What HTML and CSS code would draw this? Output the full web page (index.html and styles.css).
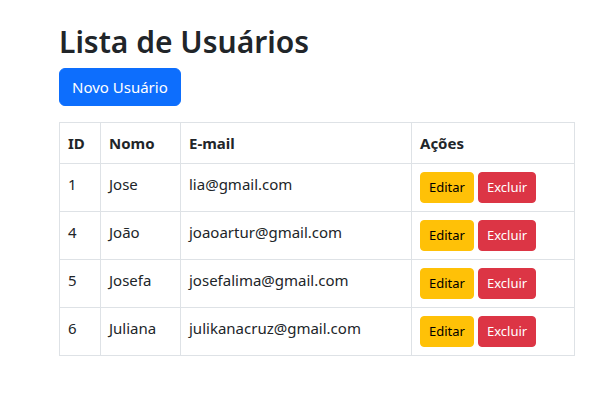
FILE: index.html
```html
<!DOCTYPE html>
<html lang="pt-BR">
<head>
<meta charset="utf-8">
<title>Lista de Usuários</title>
<link rel="stylesheet" href="styles.css">
</head>
<body>
<div class="container">
  <h1 class="title">Lista de Usuários</h1>
  <button class="btn btn-primary">Novo Usuário</button>
  <table class="table">
    <thead>
      <tr><th class="c-id">ID</th><th class="c-nome">Nomo</th><th class="c-mail">E-mail</th><th>Ações</th></tr>
    </thead>
    <tbody>
      <tr><td>1</td><td>Jose</td><td>lia@gmail.com</td><td><div class="actions"><button class="btn btn-sm btn-warning">Editar</button><button class="btn btn-sm btn-danger">Excluir</button></div></td></tr>
      <tr><td>4</td><td>João</td><td>joaoartur@gmail.com</td><td><div class="actions"><button class="btn btn-sm btn-warning">Editar</button><button class="btn btn-sm btn-danger">Excluir</button></div></td></tr>
      <tr><td>5</td><td>Josefa</td><td>josefalima@gmail.com</td><td><div class="actions"><button class="btn btn-sm btn-warning">Editar</button><button class="btn btn-sm btn-danger">Excluir</button></div></td></tr>
      <tr><td>6</td><td>Juliana</td><td>julikanacruz@gmail.com</td><td><div class="actions"><button class="btn btn-sm btn-warning">Editar</button><button class="btn btn-sm btn-danger">Excluir</button></div></td></tr>
    </tbody>
  </table>
</div>
</body>
</html>
```
FILE: styles.css
```css
* { box-sizing: border-box; }
html, body { margin: 0; padding: 0; background: #fff; }
body {
  font-family: "Noto Sans", "Open Sans", sans-serif;
  font-size: 15px;
  line-height: 24px;
  color: #212529;
}
.container {
  padding: 23px 27px 0 59px;
}
.title {
  margin: 0 0 8px;
  font-size: 30px;
  font-weight: 600;
  line-height: 37px;
}
.btn {
  display: inline-block;
  font-family: inherit;
  font-size: 15px;
  line-height: 24px;
  padding: 6px 12px;
  border: 1px solid transparent;
  border-radius: 6px;
  cursor: pointer;
}
.btn-primary { background: #0d6efd; border-color: #0d6efd; color: #fff; }
.btn-sm {
  font-size: 13px;
  line-height: 21px;
  padding: 4px 8px;
  border-radius: 4px;
}
.btn-warning { background: #ffc107; border-color: #ffc107; color: #000; }
.btn-danger { background: #dc3545; border-color: #dc3545; color: #fff; }
.table {
  margin-top: 16px;
  width: 516px;
  border-collapse: collapse;
  border: 1px solid #dee2e6;
}
.table th, .table td {
  border: 1px solid #dee2e6;
  padding: 8px;
  text-align: left;
  vertical-align: top;
}
.table th { font-weight: 700; }
.c-id { width: 41px; }
.c-nome { width: 80px; }
.c-mail { width: 231px; }
.actions { display: flex; gap: 4px; }
```
